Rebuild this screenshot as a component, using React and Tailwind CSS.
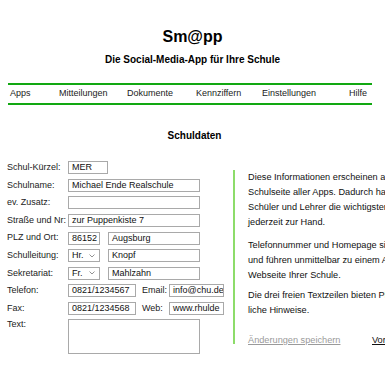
import React from "react";

const font = { fontFamily: '"Liberation Sans", Arial, sans-serif' };

function Input({ w, value }) {
  return (
    <div
      className={`h-[13px] border border-[#a9a9a9] bg-white pl-[3px] text-[9px] leading-[11px] text-[#111] whitespace-nowrap overflow-hidden ${w}`}
    >
      {value}
    </div>
  );
}

function Select({ value }) {
  return (
    <div className="h-[13px] w-[32px] border border-[#a9a9a9] bg-white pl-[3px] pr-[3px] text-[9px] leading-[11px] text-[#111] flex items-center justify-between">
      <span>{value}</span>
      <svg width="6" height="4" viewBox="0 0 6 4" className="mr-[1px]">
        <path d="M0.5 0.5 L3 3 L5.5 0.5" fill="none" stroke="#777" strokeWidth="0.8" />
      </svg>
    </div>
  );
}

function Row({ label, children }) {
  return (
    <div className="h-[17.6px] flex items-center">
      <div className="w-[61px] shrink-0 whitespace-nowrap">{label}</div>
      <div className="flex items-center gap-[8px]">{children}</div>
    </div>
  );
}

export default function App() {
  return (
    <div className="w-[385px] h-[385px] overflow-hidden bg-white text-[#222]" style={font}>
      <div className="pt-[28px] text-center text-black">
        <div className="text-[16px] leading-[18px] font-bold">Sm@pp</div>
        <div className="mt-[8px] text-[10px] leading-[12px] font-bold">
          Die Social-Media-App für Ihre Schule
        </div>
      </div>

      <div className="mt-[17px] mx-[8px] w-[364px] border-t-2 border-b-2 border-[#12a812] h-[22px] flex items-center pl-[2px] text-[9px] text-[#222]">
        <div className="w-[49px]">Apps</div>
        <div className="w-[68px]">Mitteilungen</div>
        <div className="w-[69px]">Dokumente</div>
        <div className="w-[66px]">Kennziffern</div>
        <div className="w-[87px]">Einstellungen</div>
        <div>Hilfe</div>
      </div>

      <div className="mt-[25px] text-center text-[10px] leading-[12px] font-bold text-black pl-[4px]">
        Schuldaten
      </div>

      <div className="mt-[17px] flex w-[600px] text-[9px]">
        <div className="w-[226px] pl-[7px] shrink-0">
          <Row label="Schul-Kürzel:">
            <Input w="w-[40px]" value="MER" />
          </Row>
          <Row label="Schulname:">
            <Input w="w-[132px]" value="Michael Ende Realschule" />
          </Row>
          <Row label="ev. Zusatz:">
            <Input w="w-[132px]" value="" />
          </Row>
          <Row label="Straße und Nr:">
            <Input w="w-[132px]" value="zur Puppenkiste 7" />
          </Row>
          <Row label="PLZ und Ort:">
            <Input w="w-[32px]" value="86152" />
            <Input w="w-[92px]" value="Augsburg" />
          </Row>
          <Row label="Schulleitung:">
            <Select value="Hr." />
            <Input w="w-[92px]" value="Knopf" />
          </Row>
          <Row label="Sekretariat:">
            <Select value="Fr." />
            <Input w="w-[92px]" value="Mahlzahn" />
          </Row>
          <Row label="Telefon:">
            <Input w="w-[68px]" value="0821/1234567" />
            <div className="flex items-center gap-[2px] -ml-[2px]">
              <span className="w-[25px]">Email:</span>
              <Input w="w-[55px]" value="info@chu.de" />
            </div>
          </Row>
          <Row label="Fax:">
            <Input w="w-[68px]" value="0821/1234568" />
            <div className="flex items-center gap-[2px] -ml-[2px]">
              <span className="w-[25px]">Web:</span>
              <Input w="w-[55px]" value="www.rhulde" />
            </div>
          </Row>
          <div className="flex mt-[2px]">
            <div className="w-[61px] shrink-0 leading-[11px]">Text:</div>
            <div className="h-[35px] w-[132px] border border-[#a9a9a9] bg-white"></div>
          </div>
        </div>

        <div className="ml-[7px] mt-[11px] h-[174px] border-l-2 border-[#8ddc6a] pl-[13px] text-[9.2px] leading-[15px] text-[#111] whitespace-nowrap">
          <p>
            Diese Informationen erscheinen auf der
            <br />
            Schulseite aller Apps. Dadurch haben
            <br />
            Schüler und Lehrer die wichtigsten Daten
            <br />
            jederzeit zur Hand.
          </p>
          <p className="mt-[8px]">
            Telefonnummer und Homepage sind verlinkt
            <br />
            und führen unmittelbar zu einem Anruf bzw. zur
            <br />
            Webseite Ihrer Schule.
          </p>
          <p className="mt-[5px]">
            Die drei freien Textzeilen bieten Platz für zusätz-
            <br />
            liche Hinweise.
          </p>
          <div className="mt-[15px] flex">
            <span className="w-[124px] text-[#9a9a9a] underline">Änderungen speichern</span>
            <span className="underline text-[#111]">Vorschau</span>
          </div>
        </div>
      </div>
    </div>
  );
}
